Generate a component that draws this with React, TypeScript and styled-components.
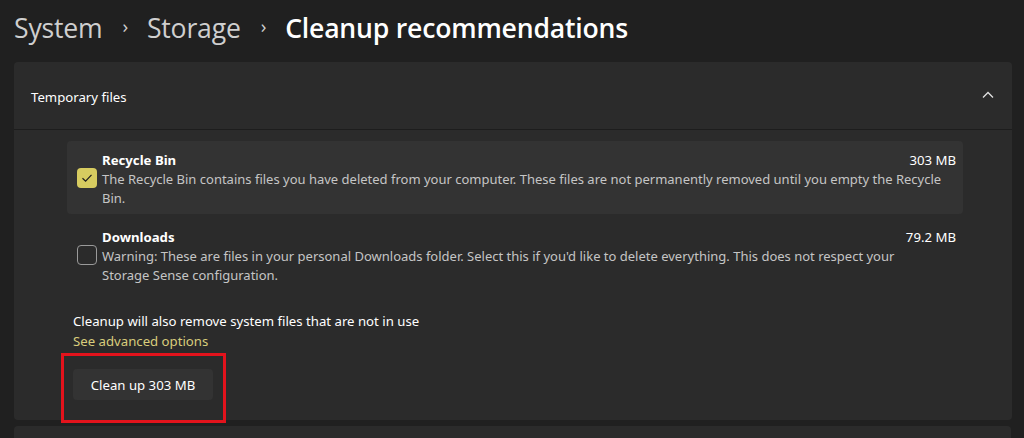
import React from "react";
import styled, { createGlobalStyle } from "styled-components";

const Global = createGlobalStyle`
  html, body { margin: 0; padding: 0; background: #202020; }
  body { font-family: "Noto Sans", "Open Sans", sans-serif; color: #ffffff; overflow: hidden; }
`;

const Page = styled.div`
  width: 1024px;
  height: 438px;
  padding: 0 12px 0 14px;
  box-sizing: border-box;
  display: flex;
  flex-direction: column;
  & > * { flex: none; }
`;

const Breadcrumb = styled.div`
  height: 62px;
  display: flex;
  align-items: center;
  font-family: "Open Sans", sans-serif;
  font-size: 26.6px;
  font-weight: 600;
  letter-spacing: -0.2px;
  padding-bottom: 6px;
  box-sizing: border-box;
`;

const Crumb = styled.span<{ $current?: boolean }>`
  color: ${(p) => (p.$current ? "#ffffff" : "#cfcfcf")};
  font-weight: ${(p) => (p.$current ? 600 : 500)};
`;

const Sep = styled.span`
  color: #cfcfcf;
  font-size: 19px;
  font-weight: 400;
  margin: 0 19px 0 20px;
  position: relative;
  top: -2px;
`;

const Card = styled.div`
  background: #2b2b2b;
  border-radius: 4px;
  display: flex;
  flex-direction: column;
`;

const CardHeader = styled.div`
  height: 68px;
  box-sizing: border-box;
  display: flex;
  align-items: center;
  justify-content: space-between;
  padding: 3px 18px 0 17px;
  font-size: 13.2px;
  color: #ffffff;
  border-bottom: 1px solid #1d1d1d;
`;

const ChevronBox = styled.span`
  display: flex;
  margin-bottom: 4px;
`;

const CardBody = styled.div`
  padding: 11px 49px 20px 53px;
  display: flex;
  flex-direction: column;
`;

const Option = styled.div<{ $selected?: boolean }>`
  display: flex;
  align-items: center;
  background: ${(p) => (p.$selected ? "#333333" : "transparent")};
  border-radius: 4px;
  padding: 10px 7px 6px 10px;
  min-height: 57px;
  margin-bottom: 4px;
`;

const Box = styled.div<{ $checked?: boolean }>`
  width: 20px;
  height: 20px;
  box-sizing: border-box;
  border-radius: 4px;
  flex: none;
  margin-right: 5px;
  margin-bottom: 4px;
  display: flex;
  align-items: center;
  justify-content: center;
  background: ${(p) => (p.$checked ? "#d7cc60" : "transparent")};
  border: ${(p) => (p.$checked ? "none" : "1px solid #9a9a9a")};
`;

const OptionText = styled.div`
  flex: 1;
  display: flex;
  flex-direction: column;
`;

const TitleRow = styled.div`
  display: flex;
  justify-content: space-between;
  line-height: 19px;
  font-size: 13.2px;
`;

const Title = styled.span`
  font-weight: 700;
  color: #ffffff;
`;

const Size = styled.span`
  color: #ffffff;
`;

const Desc = styled.div`
  font-size: 13px;
  line-height: 19px;
  color: #c5c5c5;
  padding-right: 13px;
`;

const Note = styled.div`
  margin-top: 16px;
  padding-left: 6px;
  font-size: 13.2px;
  line-height: 20px;
  color: #ffffff;
`;

const Link = styled.a`
  padding-left: 6px;
  font-size: 13.2px;
  line-height: 20px;
  color: #d8cd7c;
  text-decoration: none;
`;

const ButtonArea = styled.div`
  margin-top: 18px;
  padding-left: 6px;
  display: flex;
`;

const ButtonWrap = styled.div`
  position: relative;
`;

const Highlight = styled.div`
  position: absolute;
  top: -16px;
  left: -12px;
  right: -13px;
  bottom: -23px;
  border: 3px solid #e3131c;
  pointer-events: none;
`;

const Button = styled.button`
  width: 140px;
  height: 31px;
  background: #333333;
  border: none;
  border-radius: 4px;
  color: #ffffff;
  font-family: "Noto Sans", sans-serif;
  font-size: 13.2px;
  padding: 0;
`;

const NextCard = styled.div`
  margin-top: 6px;
  height: 20px;
  background: #2b2b2b;
  border-radius: 4px;
  margin-right: 1px;
`;

const Chevron = () => (
  <svg width="12" height="8" viewBox="0 0 12 8" fill="none">
    <path d="M1 6.5 L6 1.5 L11 6.5" stroke="#e0e0e0" strokeWidth="1.3" />
  </svg>
);

const Check = () => (
  <svg width="14" height="14" viewBox="0 0 14 14" fill="none">
    <path d="M2.5 7.2 L5.6 10.2 L11.5 3.8" stroke="#1e1e1e" strokeWidth="1.2" />
  </svg>
);

export default function App() {
  return (
    <>
      <Global />
      <Page>
        <Breadcrumb>
          <Crumb>System</Crumb>
          <Sep>›</Sep>
          <Crumb>Storage</Crumb>
          <Sep>›</Sep>
          <Crumb $current>Cleanup recommendations</Crumb>
        </Breadcrumb>
        <Card>
          <CardHeader>
            <span>Temporary files</span>
            <ChevronBox>
              <Chevron />
            </ChevronBox>
          </CardHeader>
          <CardBody>
            <Option $selected>
              <Box $checked>
                <Check />
              </Box>
              <OptionText>
                <TitleRow>
                  <Title>Recycle Bin</Title>
                  <Size>303 MB</Size>
                </TitleRow>
                <Desc>
                  The Recycle Bin contains files you have deleted from your computer. These files are not permanently removed until you empty the Recycle Bin.
                </Desc>
              </OptionText>
            </Option>
            <Option>
              <Box />
              <OptionText>
                <TitleRow>
                  <Title>Downloads</Title>
                  <Size>79.2 MB</Size>
                </TitleRow>
                <Desc>
                  Warning: These are files in your personal Downloads folder. Select this if you'd like to delete everything. This does not respect your Storage Sense configuration.
                </Desc>
              </OptionText>
            </Option>
            <Note>Cleanup will also remove system files that are not in use</Note>
            <Link href="#">See advanced options</Link>
            <ButtonArea>
              <ButtonWrap>
                <Button>Clean up 303 MB</Button>
                <Highlight />
              </ButtonWrap>
            </ButtonArea>
          </CardBody>
        </Card>
        <NextCard />
      </Page>
    </>
  );
}
